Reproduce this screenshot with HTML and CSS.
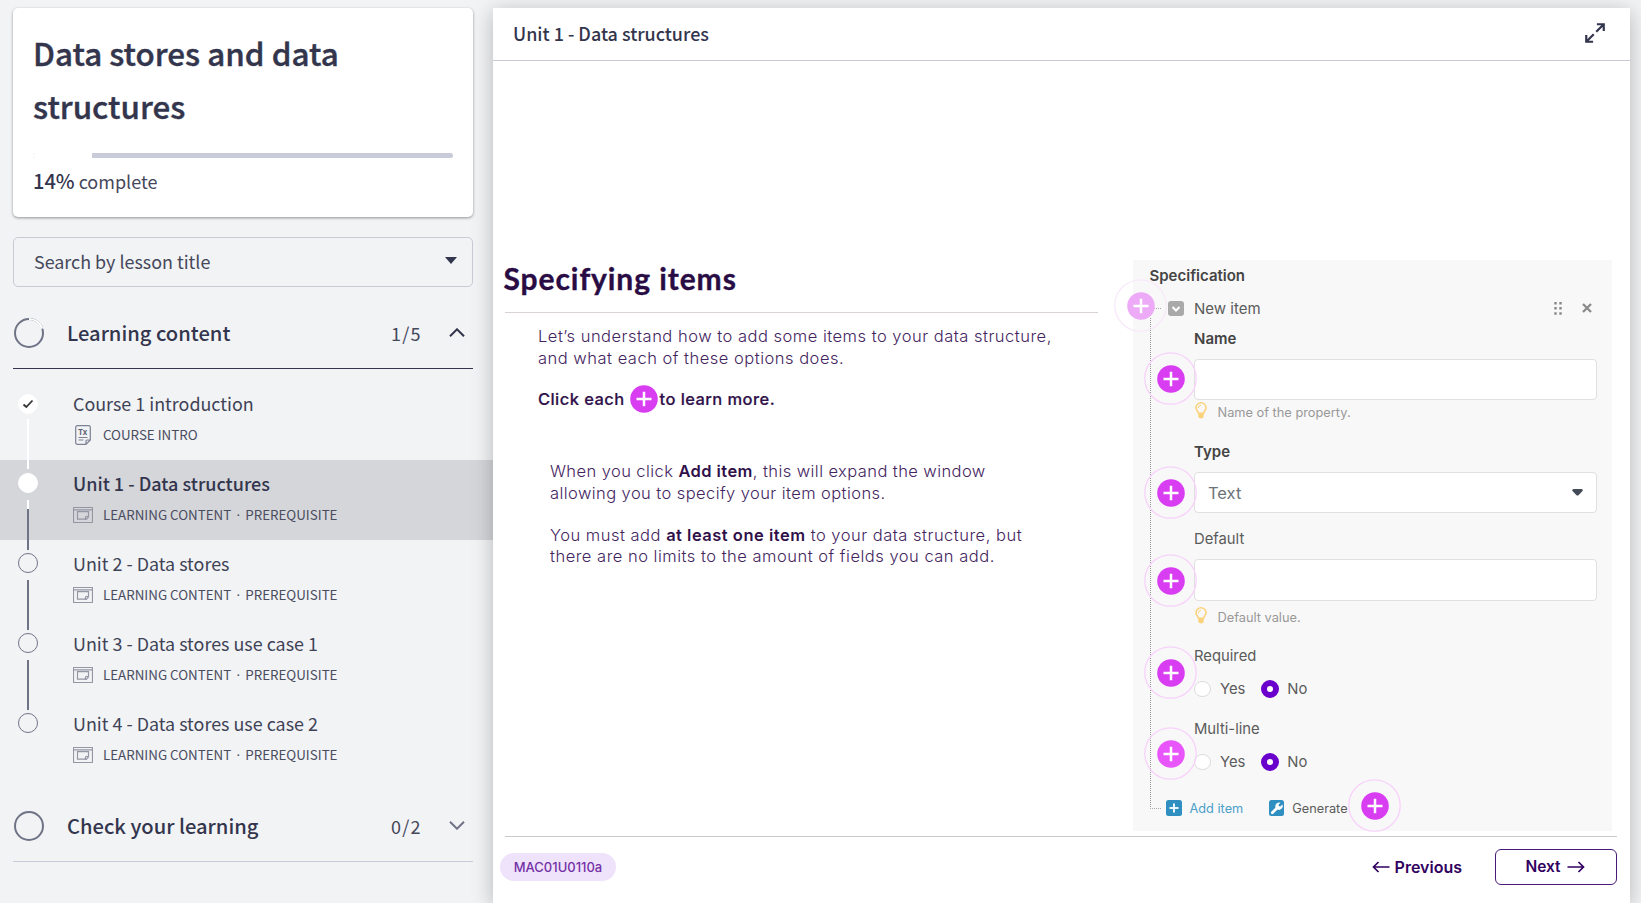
FILE: index.html
```
<!DOCTYPE html>
<html lang="en">
<head>
<meta charset="utf-8">
<title>Data stores and data structures</title>
<link rel="stylesheet" href="styles.css">
</head>
<body>
<svg width="0" height="0" class="defs">
  <defs>
    <symbol id="window" viewBox="0 0 20 16"><rect x=".5" y=".5" width="19" height="15" rx=".5"/><path d="M.5 2.8h19M15.5 9V4.6h-11v7.6h8.2M15.5 9.2v.8l-2.3 2.3h-.7V10.2q0-.7.7-.7h2.3"/></symbol>
    <symbol id="bulb" viewBox="0 0 12 17"><path d="M3.5 11.2C3 9 1 8.500 1 5.800a5 5 0 0 1 10 0c0 2.700-2 3.200-2.500 5.400z" fill="none" stroke="#fbd27c" stroke-width="1.600"/><path d="M3.300 11h5.400v3.400q-.4 2-2.700 2t-2.700-2z" fill="#fbd27c"/><path d="M3.300 6q0-2.500 2.700-2.800" fill="none" stroke="#fbd27c"/></symbol>
    <symbol id="plus" viewBox="0 0 54 54"><circle class="ring" cx="26.500" cy="26.500" r="25.700"/><circle class="disc" cx="27" cy="27" r="13.800"/><path d="M19.500 27h15M27 19.700v14.600" stroke="#fff" stroke-width="2.500"/></symbol>
  </defs>
</svg>
<div class="app">
  <aside class="sidebar">
    <section class="course">
      <h1>Data stores and data structures</h1>
      <div class="progress"><i style="width:14%"></i></div>
      <p><b>14%</b> complete</p>
    </section>
    <div class="search"><span>Search by lesson title</span><svg width="12" height="7"><path d="M0 0h12L6 7z" fill="#33354d"/></svg></div>

    <header class="group open">
      <svg class="dial" width="30" height="30" viewBox="0 0 30 30"><circle cx="15" cy="15" r="14"/><path d="M15 1A14 14 0 0 1 28.300 10.600"/></svg>
      <h2>Learning content</h2><span class="count">1/5</span>
      <svg class="chev" width="16" height="9"><path d="M1 8.300 8 1.300l7 7"/></svg>
    </header>
    <ol class="lessons">
      <li>
        <div class="rail"><span class="dot done"><svg width="12" height="10"><path d="M1.500 5.500 4.300 8 10.500 1.500"/></svg></span><span class="line white"></span></div>
        <div class="body"><h3>Course 1 introduction</h3>
          <p><span class="ico"><svg class="doc" width="16" height="20"><path d="M11 19.300H2.500Q.7 19.300.7 17.500V2.500Q.7.700 2.500.700h11q1.800 0 1.800 1.800V15L11 19.300V16q0-1 1-1h3.300M3.500 12.500h9M3.500 15h5"/><text x="3" y="10">Tx</text></svg></span>COURSE INTRO</p></div>
      </li>
      <li class="current">
        <div class="rail"><span class="dot done"></span><span class="line mixed"></span></div>
        <div class="body"><h3>Unit 1 - Data structures</h3><p><span class="ico"><svg width="20" height="16"><use href="#window"/></svg></span>LEARNING CONTENT<em>·</em>PREREQUISITE</p></div>
      </li>
      <li>
        <div class="rail"><span class="dot"></span><span class="line"></span></div>
        <div class="body"><h3>Unit 2 - Data stores</h3><p><span class="ico"><svg width="20" height="16"><use href="#window"/></svg></span>LEARNING CONTENT<em>·</em>PREREQUISITE</p></div>
      </li>
      <li>
        <div class="rail"><span class="dot"></span><span class="line"></span></div>
        <div class="body"><h3>Unit 3 - Data stores use case 1</h3><p><span class="ico"><svg width="20" height="16"><use href="#window"/></svg></span>LEARNING CONTENT<em>·</em>PREREQUISITE</p></div>
      </li>
      <li>
        <div class="rail"><span class="dot"></span></div>
        <div class="body"><h3>Unit 4 - Data stores use case 2</h3><p><span class="ico"><svg width="20" height="16"><use href="#window"/></svg></span>LEARNING CONTENT<em>·</em>PREREQUISITE</p></div>
      </li>
    </ol>
    <header class="group">
      <svg class="dial" width="30" height="30" viewBox="0 0 30 30"><circle cx="15" cy="15" r="14"/></svg>
      <h2>Check your learning</h2><span class="count">0/2</span>
      <svg class="chev" width="16" height="9"><path d="M1 .700 8 7.700l7-7"/></svg>
    </header>
  </aside>

  <main class="viewer">
    <header class="bar">
      <h2>Unit 1 - Data structures</h2>
      <svg width="20" height="20" viewBox="0 0 21 21"><path d="M12.500 1.300H19.700V8.500M19.200 1.800 11.800 9.200M1.300 12.500V19.700H8.500M1.800 19.200 9.200 11.800"/></svg>
    </header>
    <div class="slide">
      <div class="stage">
        <article class="copy">
          <h1>Specifying items</h1>
          <div class="intro">
            <p>Let’s understand how to add some items to your data structure,<br>and what each of these options does.</p>
            <p class="cta"><span>Click each</span><svg width="28" height="28" viewBox="13 13 28 28"><use href="#plus" width="54" height="54"/></svg><span>to learn more.</span></p>
          </div>
          <div class="detail">
            <p class="first">When you click <b>Add item</b>, this will expand the window<br>allowing you to specify your item options.</p>
            <p>You must add <b>at least one item</b> to your data structure, but<br>there are no limits to the amount of fields you can add.</p>
          </div>
        </article>
        <section class="spec">
          <div class="tree"></div>
          <h4 class="title">Specification</h4>
          <div class="item"><i class="twig"></i><svg width="16" height="15"><rect width="16" height="15" rx="3" fill="#a9a9a9"/><path d="M4.500 6 8 9.500 11.500 6" fill="none" stroke="#fff" stroke-width="2"/></svg><span>New item</span>
            <svg class="grip" width="8" height="13"><path d="M1.500 0v13M6.500 0v13" stroke="#888" stroke-width="2.400" stroke-dasharray="2.500 2.600"/></svg>
            <svg width="10" height="10"><path d="M1 1l8 8M9 1 1 9" stroke="#8a8a8a" stroke-width="2.300"/></svg></div>
          <div class="fields">
            <h4>Name</h4>
            <div class="input"></div>
            <p class="hint"><svg width="12" height="17"><use href="#bulb"/></svg>Name of the property.</p>
            <h4 class="type">Type</h4>
            <div class="input"><span>Text</span><svg width="11" height="7"><path d="M1.500 0h8Q11.500.400 10.500 2L6.500 6.200q-1 .8-2 0L.5 2Q-.3.400 1.500 0z" fill="#434b56"/></svg></div>
            <h5>Default</h5>
            <div class="input tall"></div>
            <p class="hint low"><svg width="12" height="17"><use href="#bulb"/></svg>Default value.</p>
            <h5 class="req">Required</h5>
            <div class="radios"><i></i><span>Yes</span><i class="on"></i><span>No</span></div>
            <h5 class="multi">Multi-line</h5>
            <div class="radios"><i></i><span>Yes</span><i class="on"></i><span>No</span></div>
          </div>
          <div class="actions">
            <svg width="16" height="16"><rect width="16" height="16" rx="2.500" fill="#2f8fc0"/><path d="M3.500 8h9M8 3.500v9" stroke="#e8f7ff" stroke-width="2"/></svg><span class="add">Add item</span>
            <svg width="15" height="16"><rect width="15" height="16" rx="2.500" fill="#2f8fc0"/><path d="M3.300 12.700 9 7" stroke="#fff" stroke-width="2.800" stroke-linecap="round"/><path d="M11.500 2.800 9.500 4.700l.3 1.500 1.500.300 2-2A3.700 3.700 0 1 1 11.500 2.800z" fill="#fff"/></svg><span class="gen">Generate</span>
          </div>
          <svg class="spot faded" style="left:-19px;top:18.500px"><use href="#plus"/></svg>
          <svg class="spot" style="left:11.500px;top:92px"><use href="#plus"/></svg>
          <svg class="spot" style="left:11.500px;top:205.500px"><use href="#plus"/></svg>
          <svg class="spot" style="left:11.500px;top:293.500px"><use href="#plus"/></svg>
          <svg class="spot" style="left:11.500px;top:386px"><use href="#plus"/></svg>
          <svg class="spot light" style="left:11.500px;top:466.500px"><use href="#plus"/></svg>
          <svg class="spot cover" style="left:215.500px;top:518.500px"><use href="#plus"/></svg>
        </section>
      </div>
      <footer>
        <span class="badge">MAC01U0110a</span>
        <a class="prev"><svg width="18" height="12"><path d="M17.500 6H1.500M6.500 1 1.500 6l5 5"/></svg>Previous</a>
        <a class="next">Next<svg width="18" height="12"><path d="M.5 6h16M11.500 1l5 5-5 5"/></svg></a>
      </footer>
    </div>
  </main>
</div>
</body>
</html>
```
FILE: styles.css
```
* { box-sizing: border-box; margin: 0; padding: 0; }
body { background: #f1f3f5; color: #33354d; font-family: "Noto Sans CJK SC", "Noto Sans", sans-serif; height: 903px; overflow: hidden; }
.defs { position: absolute; }
svg { flex: none; display: block; }
.app { display: flex; height: 903px; padding-top: 8px; }

.sidebar { width: 493px; flex: none; }
.course { margin: 0 20px 0 13px; height: 209px; padding: 18px 20px 0; background: #fff; border-radius: 5px; box-shadow: 0 1px 3px rgba(0,0,0,.4); }
.course h1 { font-size: 31.400px; line-height: 53px; font-weight: 500; -webkit-text-stroke: .4px #33354d; }
.progress { height: 5px; margin-top: 21px; border-radius: 3px; background: #c9ccd8; overflow: hidden; }
.progress i { display: block; height: 5px; background: #fff; }
.course p { margin-top: 8px; font-size: 18px; line-height: 30px; color: #45475a; }
.course b { font-weight: 500; font-size: 20px; color: #33354d; }
.search { margin: 20px 20px 0 13px; height: 50px; border: 1px solid #c8cbd6; border-radius: 5px; padding: 0 15px 3px 20px; display: flex; align-items: center; justify-content: space-between; font-size: 17.900px; color: #45475a; }

.group { margin: 10px 20px 0 13px; height: 72px; display: flex; align-items: center; border-bottom: 1px solid #c8cbd8; color: #33354d; }
.group.open { border-color: #33354d; }
.dial { margin-left: 1px; fill: none; stroke: #6f7386; stroke-width: 2; }
.dial path { stroke: #fff; }
.group h2 { font-size: 20.150px; font-weight: 500; margin-left: 23px; flex: 1; }
.count { font-size: 18px; letter-spacing: 1.200px; width: 58px; color: #45475a; }
.chev { margin-right: 8px; fill: none; stroke: #6f7386; stroke-width: 2; }
.open .chev { stroke: #33354d; }

.lessons { list-style: none; padding-top: 11px; margin-bottom: 10px; }
.lessons li { display: flex; height: 80px; }
.lessons .current { background: #d5d6da; }
.rail { width: 56px; flex: none; display: flex; flex-direction: column; align-items: center; padding-top: 13px; }
.lessons li:first-child .rail { padding-top: 14px; }
.dot { width: 20px; height: 20px; flex: none; border: 1px solid #6f7386; border-radius: 50%; display: flex; align-items: center; justify-content: center; }
.dot.done { background: #fff; border-color: #fff; }
.dot path { fill: none; stroke: #333; stroke-width: 1.800; }
.line { width: 2px; height: 50px; flex: none; margin-top: 7px; background: #6f7386; }
.line.white { background: #fff; margin-top: 5px; }
.line.mixed { background: linear-gradient(#fff 9px, #6f7386 9px); }
.body { padding: 8px 0 0 17px; }
.body h3 { font-size: 17.900px; font-weight: 400; line-height: 30px; margin-bottom: 2px; color: #404256; }
.current h3 { font-weight: 500; color: #33354d; font-size: 18.050px; }
.body p { display: flex; align-items: center; font-size: 13.350px; line-height: 30px; color: #4a4c60; }
.ico { width: 30px; }
.ico svg { fill: none; stroke: #9496a4; stroke-width: 1.200; }
.ico .doc { margin-left: 2px; stroke: #7c8193; }
.doc text { font: 700 8px "Noto Sans CJK SC", sans-serif; fill: #5c6175; stroke: none; }
.body em { font-family: "Noto Sans", sans-serif; font-style: normal; width: 14px; text-align: center; }

.viewer { width: 1137px; flex: none; background: #fff; box-shadow: 0 4px 20px rgba(0,0,0,.25); }
.bar { height: 53px; border-bottom: 1px solid #c9cad6; display: flex; align-items: center; justify-content: space-between; padding: 0 25px 3px 20px; }
.bar h2 { font-size: 17.950px; font-weight: 500; }
.bar svg { fill: none; stroke: #33354d; stroke-width: 2.300; }

.slide { font-family: Inter, sans-serif; color: #43245e; padding: 199px 13px 0 7px; }
.stage { display: flex; justify-content: space-between; margin-left: 5px; height: 577px; border-bottom: 1.500px solid #cac8cb; }
.copy { width: 593px; }
.copy h1 { font: 700 30px/37px Lato, sans-serif; letter-spacing: .920px; text-indent: -1.500px; color: #2a0c45; -webkit-text-stroke: .35px #2a0c45; border-bottom: 1.500px solid #d8d2d8; height: 53px; }
.copy p { font-size: 16.500px; font-weight: 300; letter-spacing: .500px; line-height: 21.200px; white-space: nowrap; }
.copy b { font-weight: 600; color: #2f1049; }
.copy .first { letter-spacing: .420px; }
.intro { padding: 12px 0 0 33px; }
.intro p { line-height: 22px; }
.intro .cta { display: flex; align-items: center; font-weight: 500; color: #2f1049; letter-spacing: .430px; height: 28px; margin-top: 16.400px; -webkit-text-stroke: .2px #2f1049; }
.cta svg { margin: 0 2px 0 5px; --ring: none; }
.detail { padding: 48px 0 0 45px; }
.detail p { margin-bottom: 20.800px; }
.ring { fill: var(--cover, none); stroke: var(--ring, #f8d2fb); stroke-width: 1.300; }
.disc { fill: var(--disc, #d83df2); }

.spec { position: relative; width: 479px; height: 571px; margin-right: 5.500px; background: #f8f8f8; color: #5b5b5b; }
.spec h4 { font-weight: 600; color: #444; font-size: 15px; line-height: 20px; }
.spec h5 { font-weight: 400; font-size: 14.800px; line-height: 20px; }
.tree { position: absolute; left: 17px; top: 58px; width: 11px; height: 491px; border-left: 1px dotted #999; border-bottom: 1px dotted #aaa; }
.title { padding: 6px 0 0 17px; }
.item { display: flex; align-items: center; height: 20px; margin: 12px 20px 0 21px; font-size: 15px; }
.twig { width: 7px; margin-right: 7px; border-top: 1px dotted #aaa; }
.item span { margin-left: 10.500px; flex: 1; }
.grip { margin-right: 20px; }
.fields { margin: 11px 15px 0 61.500px; }
.input { height: 41px; margin-top: 10px; background: #fff; border: 1.500px solid #e0e0e0; border-radius: 4px; display: flex; justify-content: space-between; align-items: center; padding: 0 13px; font-size: 16.500px; color: #6d7278; }
.hint { display: flex; align-items: center; height: 18px; margin-top: 3px; font-size: 12.800px; color: #999; gap: 10.500px; }
.hint svg { margin: -3px 0 0 1px; }
.type { margin-top: 21px; }
.spec .type + .input { margin-top: 10px; }
.fields h5 { margin-top: 16px; }
.fields .tall { margin-top: 10px; height: 42px; }
.fields .low { margin-top: 7px; }
.fields .req { margin-top: 20px; }
.fields .multi { margin-top: 20px; }
.radios { display: flex; align-items: center; height: 20px; margin-top: 13px; font-size: 14.800px; }
.radios i { width: 16.500px; height: 16.500px; border: 1.500px solid #dcdcdc; border-radius: 50%; background: #fff; }
.radios span { margin: 0 16px 0 9.500px; }
.radios .on { width: 18px; height: 18px; border: 6px solid #6a00cc; }
.radios .on + span { margin-left: 8px; }
.actions { display: flex; align-items: center; height: 20px; margin: 26px 0 0 33px; font-size: 12.750px; }
.add { color: #4ba0c9; margin: 0 26px 0 8px; }
.gen { margin-left: 8px; }
.spot { position: absolute; width: 54px; height: 54px; }
.faded { --disc: #edabf7; --ring: #f8e9fa; }
.light { --disc: #e856fb; }
.cover { --cover: #f8f8f8; }

footer { display: flex; align-items: center; height: 60px; font-weight: 600; font-size: 16px; color: #310060; }
.badge { width: 116px; height: 28px; border-radius: 14px; background: #efe3fb; color: #7430a6; font-size: 13px; font-weight: 500; line-height: 28px; text-align: center; }
footer path { fill: none; stroke: #310060; stroke-width: 1.700; }
.prev { margin: 0 33px 1px auto; display: flex; align-items: center; gap: 5px; }
.next { width: 122px; height: 36px; border: 1.500px solid #4a1a78; border-radius: 6px; display: flex; align-items: center; justify-content: center; gap: 6px; padding: 0 2px 1px 0; font-size: 15.500px; }
```
